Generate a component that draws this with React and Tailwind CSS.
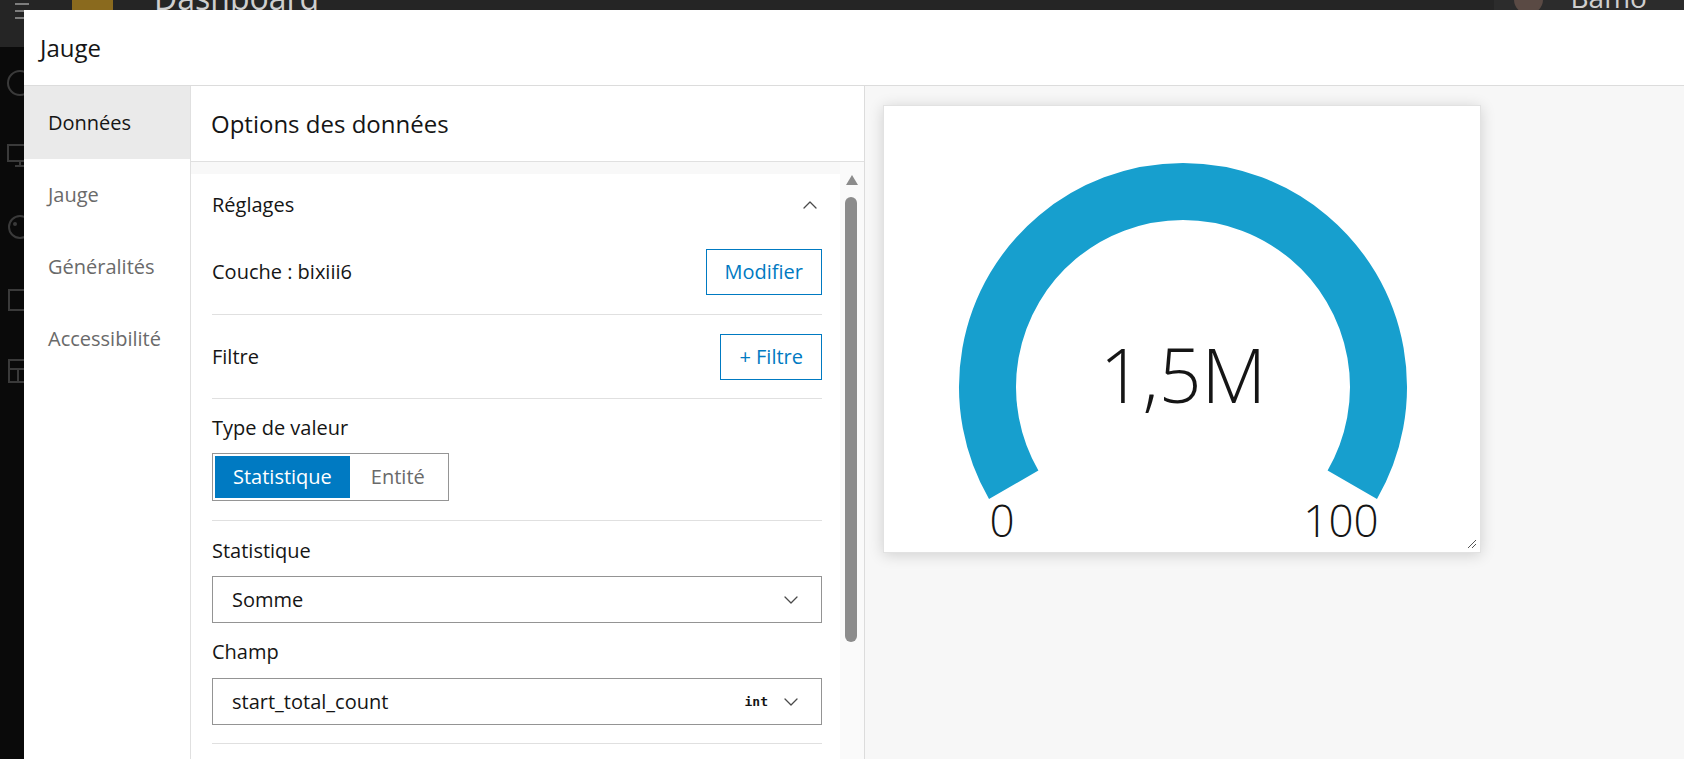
import { ChevronDown, ChevronUp } from "lucide-react";

function NavItem({ label, active }) {
  return (
    <div
      className={`flex h-[72px] items-center px-[24px] text-[20px] ${
        active ? "h-[73px] bg-[#eaeaea] text-[#151515]" : "text-[#6a6a6a]"
      }`}
    >
      {label}
    </div>
  );
}

function OutlineButton({ children }) {
  return (
    <button className="h-[46px] border border-[#007ac2] px-[18px] text-[20px] text-[#007ac2]">
      {children}
    </button>
  );
}

function SelectBox({ value, tag }) {
  return (
    <div className="flex h-[47px] items-center justify-between border border-[#949494] pl-[19px] pr-[24px] text-[20px] text-[#151515]">
      <span>{value}</span>
      <div className="flex items-center gap-[17px]">
        {tag && (
          <span className="font-['DejaVu_Sans_Mono',monospace] text-[13px] font-semibold">
            {tag}
          </span>
        )}
        <ChevronDown size={24} strokeWidth={1.3} className="-mx-[6px] text-[#4a4a4a]" />
      </div>
    </div>
  );
}

function Gauge() {
  return (
    <svg width="598" height="448" viewBox="0 0 598 448">
      <path
        d="M 129.7 378.75 A 195.5 195.5 0 1 1 468.3 378.75"
        fill="none"
        stroke="#179fce"
        strokeWidth="57"
      />
      <text x="299" y="297" textAnchor="middle" fontSize="75" fontWeight="300" fill="#151515">
        1,5M
      </text>
      <text x="118" y="431" textAnchor="middle" fontSize="44" fontWeight="300" fill="#151515">
        0
      </text>
      <text x="457" y="431" textAnchor="middle" fontSize="44" fontWeight="300" fill="#151515">
        100
      </text>
    </svg>
  );
}

export default function App() {
  return (
    <div className="relative h-[759px] w-full overflow-hidden bg-[#0a0a0a] font-['Open_Sans',sans-serif]">
      {/* app behind the dialog */}
      <div className="flex h-[47px] items-start bg-[#252525]">
        <svg width="30" height="20" viewBox="0 0 30 20" className="mt-[3px] ml-[14px]">
          <path d="M1 1h14M1 8h14M1 15h14" stroke="#9a9a9a" strokeWidth="1.5" />
        </svg>
        <div className="ml-[28px] h-[30px] w-[41px] -translate-y-[20px] bg-[#8a6a1e]" />
        <span className="ml-[41px] -mt-[26px] text-[32px] text-[#cfcfcf]">Dashboard</span>
        <div className="ml-auto flex h-[47px] w-[190px] items-start bg-[#2c2c2c] pl-[20px]">
          <div className="-mt-[20px] h-[34px] w-[34px] rounded-full bg-[#5a4a44]" />
          <span className="ml-[28px] -mt-[24px] text-[28px] text-[#cfcfcf]">Bamo Abo</span>
        </div>
      </div>
      <div className="flex w-[24px] flex-col items-start gap-[44px] pt-[22px] pl-[6px]">
        <svg width="28" height="28" viewBox="0 0 28 28">
          <circle cx="14" cy="14" r="12" fill="none" stroke="#3a3a3a" strokeWidth="2" />
        </svg>
        <svg width="28" height="28" viewBox="0 0 28 28">
          <rect x="2" y="4" width="24" height="16" fill="none" stroke="#3a3a3a" strokeWidth="2" />
          <path d="M14 20v5M9 25h10" stroke="#3a3a3a" strokeWidth="2" />
        </svg>
        <svg width="28" height="28" viewBox="0 0 28 28">
          <circle cx="14" cy="14" r="11" fill="none" stroke="#3a3a3a" strokeWidth="2" />
          <circle cx="9" cy="11" r="2" fill="#3a3a3a" />
        </svg>
        <svg width="28" height="28" viewBox="0 0 28 28">
          <rect x="3" y="5" width="22" height="20" fill="none" stroke="#3a3a3a" strokeWidth="2" />
        </svg>
        <svg width="28" height="28" viewBox="0 0 28 28">
          <rect x="3" y="3" width="22" height="22" fill="none" stroke="#3a3a3a" strokeWidth="2" />
          <path d="M3 12h22M12 12v13" stroke="#3a3a3a" strokeWidth="2" />
        </svg>
      </div>

      {/* dialog */}
      <div className="absolute top-[10px] right-0 bottom-0 left-[24px] flex flex-col bg-white text-[#151515]">
        <div className="flex h-[76px] shrink-0 items-center border-b border-[#dcdcdc] px-[16px] text-[24px]">
          Jauge
        </div>

        <div className="flex min-h-0 flex-1">
          {/* nav */}
          <div className="w-[167px] shrink-0 border-r border-[#e0e0e0]">
            <NavItem label="Données" active />
            <NavItem label="Jauge" />
            <NavItem label="Généralités" />
            <NavItem label="Accessibilité" />
          </div>

          {/* options */}
          <div className="flex w-[674px] shrink-0 flex-col border-r border-[#dcdcdc]">
            <div className="flex h-[76px] shrink-0 items-center border-b border-[#e0e0e0] px-[20px] text-[24px]">
              Options des données
            </div>
            <div className="flex min-h-0 flex-1">
              <div className="flex-1 overflow-hidden">
                <div className="h-[12px] bg-[#f8f8f8]" />
                <div className="pr-[18px] pl-[21px]">
                  <div className="flex h-[61px] items-center justify-between">
                    <span className="text-[20px] font-medium">Réglages</span>
                    <ChevronUp size={24} strokeWidth={1.3} className="text-[#4a4a4a]" />
                  </div>

                  <div className="flex items-center justify-between border-b border-[#e0e0e0] pt-[14px] pb-[19px] text-[20px]">
                    <span>Couche : bixiii6</span>
                    <OutlineButton>Modifier</OutlineButton>
                  </div>

                  <div className="flex items-center justify-between border-b border-[#e0e0e0] pt-[19px] pb-[18px] text-[20px]">
                    <span>Filtre</span>
                    <OutlineButton>+ Filtre</OutlineButton>
                  </div>

                  <div className="border-b border-[#e0e0e0] pt-[15px] pb-[19px]">
                    <div className="text-[20px] leading-[28px]">Type de valeur</div>
                    <div className="mt-[11px] inline-flex border border-[#959595] p-[2px] text-[20px]">
                      <div className="flex h-[42px] items-center bg-[#007ac2] px-[18px] text-white">
                        Statistique
                      </div>
                      <div className="flex h-[42px] items-center px-[21px] text-[#6a6a6a]">
                        Entité
                      </div>
                    </div>
                  </div>

                  <div className="border-b border-[#e0e0e0] pt-[16px] pb-[18px]">
                    <div className="text-[20px] leading-[28px]">Statistique</div>
                    <div className="mt-[11px]">
                      <SelectBox value="Somme" />
                    </div>
                    <div className="mt-[15px] text-[20px] leading-[28px]">Champ</div>
                    <div className="mt-[12px]">
                      <SelectBox value="start_total_count" tag="int" />
                    </div>
                  </div>
                  <div className="h-[200px]" />
                </div>
              </div>

              {/* scrollbar */}
              <div className="flex w-[24px] shrink-0 flex-col items-start bg-[#fafafa] pl-[5px]">
                <svg width="14" height="12" viewBox="0 0 14 12" className="mt-[12px]">
                  <path d="M7 1 L13 11 H1 Z" fill="#8c8c8c" />
                </svg>
                <div className="mt-[11px] h-[445px] w-[12px] rounded-full bg-[#8c8c8c]" />
              </div>
            </div>
          </div>

          {/* preview */}
          <div className="flex-1 bg-[#f7f7f7] pt-[19px] pl-[18px]">
            <div className="relative h-[448px] w-[598px] border border-[#e2e2e2] bg-white shadow-[0_2px_14px_rgba(0,0,0,0.16)]">
              <Gauge />
              <svg width="10" height="10" viewBox="0 0 10 10" className="absolute right-[3px] bottom-[3px]">
                <path d="M9 1 L1 9 M9 5 L5 9" stroke="#555" strokeWidth="1" />
              </svg>
            </div>
          </div>
        </div>
      </div>
    </div>
  );
}
